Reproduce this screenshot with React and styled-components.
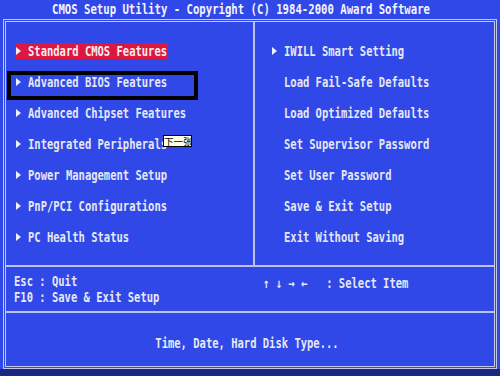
import React from "react";
import styled, { createGlobalStyle } from "styled-components";

const GlobalStyle = createGlobalStyle`
  html, body {
    margin: 0;
    padding: 0;
    background: #3048e8;
  }
`;

const leftItems = [
  { label: "Standard CMOS Features", selected: true },
  { label: "Advanced BIOS Features", marked: true },
  { label: "Advanced Chipset Features" },
  { label: "Integrated Peripherals", tip: "下一张" },
  { label: "Power Management Setup" },
  { label: "PnP/PCI Configurations" },
  { label: "PC Health Status" },
];

const rightItems = [
  { label: "IWILL Smart Setting", arrow: true },
  { label: "Load Fail-Safe Defaults" },
  { label: "Load Optimized Defaults" },
  { label: "Set Supervisor Password" },
  { label: "Set User Password" },
  { label: "Save & Exit Setup" },
  { label: "Exit Without Saving" },
];

const Screen = styled.div`
  width: 500px;
  height: 376px;
  display: flex;
  flex-direction: column;
  background: #3048e8;
  color: #e6e8f4;
  font-family: "DejaVu Sans Mono", "Liberation Mono", monospace;
  font-weight: bold;
  font-size: 10.5px;
  overflow: hidden;
`;

const TitleBar = styled.div`
  height: 19px;
  line-height: 19px;
  padding-left: 52px;
  font-size: 10.65px;
  color: #f4f4ff;
  white-space: pre;
`;

const Label = styled.span`
  display: inline-block;
  transform: scaleY(1.3);
  white-space: pre;
`;

const Frame = styled.div`
  margin-left: 3px;
  width: 494px;
  height: 350px;
  box-sizing: border-box;
  border: 3px double #c4c8e8;
  display: flex;
  flex-direction: column;
`;

const Menu = styled.div`
  height: 243px;
  display: flex;
  border-bottom: 2px solid #bcc2ee;
`;

const Column = styled.div`
  width: ${({ $width }) => $width}px;
  box-sizing: border-box;
  padding: 13px 0 0 ${({ $pad }) => $pad}px;
  border-right: ${({ $divider }) => ($divider ? "2px solid #bcc2ee" : "none")};
`;

const Row = styled.div`
  position: relative;
  height: 31px;
  display: flex;
  align-items: center;
`;

const Item = styled.div`
  display: flex;
  align-items: center;
  height: 16px;
  padding: 0 1px;
  background: ${({ $selected }) => ($selected ? "#dc1840" : "transparent")};
  color: ${({ $selected }) => ($selected ? "#f8eef0" : "#e6e8f4")};
`;

const Arrow = styled.span`
  width: 0;
  height: 0;
  border-top: 4.5px solid transparent;
  border-bottom: 4.5px solid transparent;
  border-left: 5px solid #eef0fa;
  margin-right: 7px;
  visibility: ${({ $hidden }) => ($hidden ? "hidden" : "visible")};
`;

const MarkBox = styled.div`
  position: absolute;
  left: -8px;
  top: 5px;
  width: 191px;
  height: 29px;
  box-sizing: border-box;
  border: 4px solid #000;
`;

const Tooltip = styled.div`
  position: absolute;
  left: 148px;
  top: 7px;
  width: 29px;
  height: 12px;
  box-sizing: border-box;
  border: 1px solid #000;
  background: #ffffe1;
  color: #000;
  font-family: "Noto Sans CJK SC", sans-serif;
  font-weight: normal;
  font-size: 9.5px;
  line-height: 10px;
  text-align: center;
  white-space: nowrap;
  overflow: hidden;
`;

const Keys = styled.div`
  height: 44px;
  display: flex;
  border-bottom: 2px solid #bcc2ee;
`;

const KeyColumn = styled.div`
  width: ${({ $width }) => $width}px;
  padding: ${({ $top }) => $top}px 0 0 ${({ $pad }) => $pad}px;
  box-sizing: border-box;
`;

const KeyLine = styled.div`
  height: 16px;
  line-height: 16px;
`;

const Help = styled.div`
  flex: 1;
  padding: 22px 6px 0 0;
  text-align: center;
  line-height: 16px;
`;

const BottomStrip = styled.div`
  flex: 1;
  background: #1c2680;
`;

const MenuColumn = ({ items, width, pad, divider }) => (
  <Column $width={width} $pad={pad} $divider={divider}>
    {items.map((it) => (
      <Row key={it.label}>
        <Item $selected={it.selected}>
          <Arrow $hidden={it.arrow === false} />
          <Label>{it.label}</Label>
        </Item>
        {it.marked && <MarkBox />}
        {it.tip && <Tooltip>{it.tip}</Tooltip>}
      </Row>
    ))}
  </Column>
);

export default function App() {
  const right = rightItems.map((it) => ({ ...it, arrow: !!it.arrow }));
  return (
    <>
      <GlobalStyle />
      <Screen>
        <TitleBar>
          <Label>CMOS Setup Utility - Copyright (C) 1984-2000 Award Software</Label>
        </TitleBar>
        <Frame>
          <Menu>
            <MenuColumn items={leftItems} width={249} pad={9} divider />
            <MenuColumn items={right} width={239} pad={16} />
          </Menu>
          <Keys>
            <KeyColumn $width={257} $pad={8} $top={6}>
              <KeyLine>
                <Label>Esc : Quit</Label>
              </KeyLine>
              <KeyLine>
                <Label>F10 : Save &amp; Exit Setup</Label>
              </KeyLine>
            </KeyColumn>
            <KeyColumn $width={231} $pad={0} $top={8}>
              <KeyLine>
                <Label>{"↑ ↓ → ←   : Select Item"}</Label>
              </KeyLine>
            </KeyColumn>
          </Keys>
          <Help>
            <Label>Time, Date, Hard Disk Type...</Label>
          </Help>
        </Frame>
        <BottomStrip />
      </Screen>
    </>
  );
}
